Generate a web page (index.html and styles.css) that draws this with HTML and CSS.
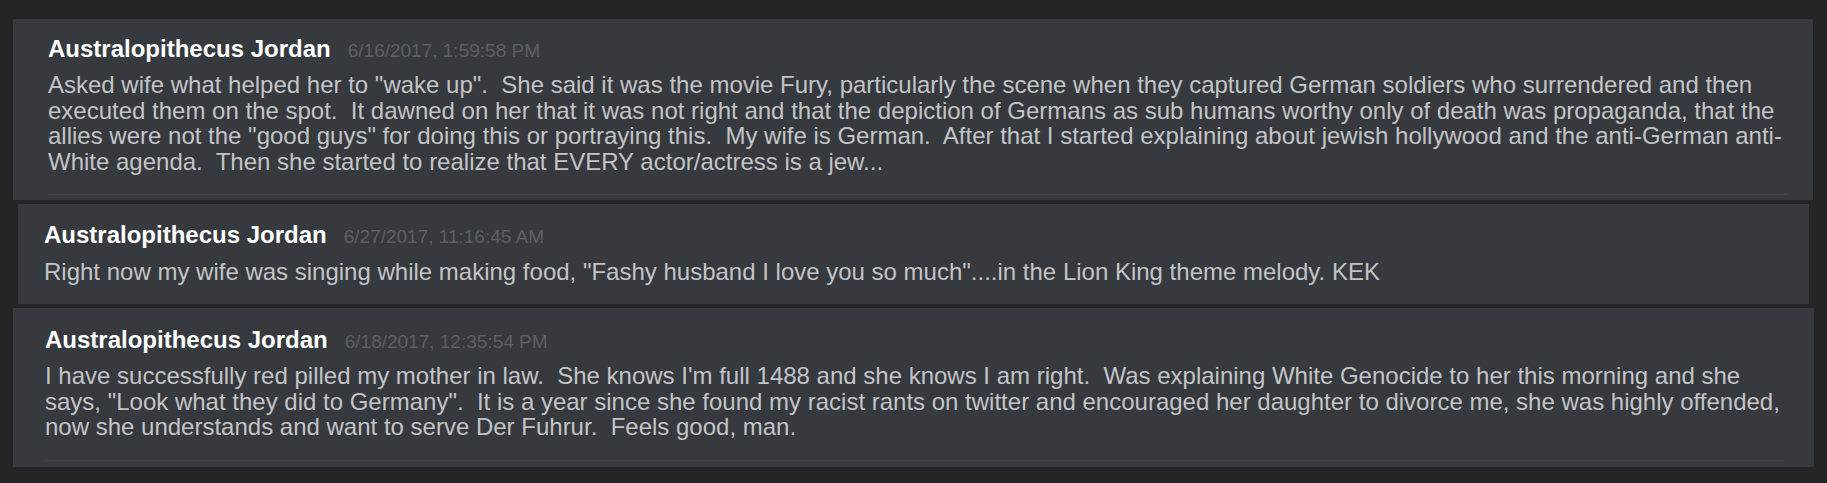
FILE: index.html
```html
<!DOCTYPE html>
<html lang="en">
<head>
<meta charset="utf-8">
<title>Messages</title>
<link rel="stylesheet" href="styles.css">
</head>
<body>
<main class="feed">
  <article class="msg msg--first">
    <header class="msg__head">
      <span class="msg__name">Australopithecus Jordan</span>
      <span class="msg__time">6/16/2017, 1:59:58 PM</span>
    </header>
    <div class="msg__body">Asked wife what helped her to "wake up".  She said it was the movie Fury, particularly the scene when they captured German soldiers who surrendered and then executed them on the spot.  It dawned on her that it was not right and that the depiction of Germans as sub humans worthy only of death was propaganda, that the allies were not the "good guys" for doing this or portraying this.  My wife is German.  After that I started explaining about jewish hollywood and the anti-German anti-White agenda.  Then she started to realize that EVERY actor/actress is a jew...</div>
  </article>
  <article class="msg msg--second">
    <header class="msg__head">
      <span class="msg__name">Australopithecus Jordan</span>
      <span class="msg__time">6/27/2017, 11:16:45 AM</span>
    </header>
    <div class="msg__body">Right now my wife was singing while making food, "Fashy husband I love you so much"....in the Lion King theme melody. KEK</div>
  </article>
  <article class="msg msg--third">
    <header class="msg__head">
      <span class="msg__name">Australopithecus Jordan</span>
      <span class="msg__time">6/18/2017, 12:35:54 PM</span>
    </header>
    <div class="msg__body">I have successfully red pilled my mother in law.  She knows I'm full 1488 and she knows I am right.  Was explaining White Genocide to her this morning and she says, "Look what they did to Germany".  It is a year since she found my racist rants on twitter and encouraged her daughter to divorce me, she was highly offended, now she understands and want to serve Der Fuhrur.  Feels good, man.</div>
  </article>
</main>
</body>
</html>
```

FILE: styles.css
```css
html, body {
  margin: 0;
  padding: 0;
  background: #252525;
}

body {
  width: 1827px;
  height: 483px;
  overflow: hidden;
  font-family: "Liberation Sans", Arial, sans-serif;
}

.feed {
  display: flex;
  flex-direction: column;
  gap: 4px;
  padding-top: 19px;
}

.msg {
  background: #36393e;
  padding-top: 17px;
  padding-bottom: 5px;
}

.msg--first {
  margin: 0 14px 0 13px;
  padding-left: 35px;
  padding-right: 25px;
}

.msg--second {
  margin: 0 18px 0 18px;
  padding-left: 26px;
  padding-right: 25px;
  padding-top: 18px;
  padding-bottom: 0;
}

.msg--third {
  margin: 0 13px 0 13px;
  padding-left: 32px;
  padding-right: 29px;
  padding-top: 19px;
  padding-bottom: 6px;
}

.msg__head {
  display: flex;
  align-items: baseline;
  gap: 17px;
  height: 26px;
  line-height: 26px;
}

.msg__name {
  color: #ffffff;
  font-weight: 700;
  font-size: 24px;
}

.msg__time {
  color: #5e6064;
  font-size: 19px;
}

.msg__body {
  margin-top: 10px;
  padding-bottom: 20px;
  border-bottom: 1px solid #3f4247;
  color: #c3c4c6;
  font-size: 24px;
  line-height: 25.6px;
  white-space: pre-wrap;
}

.msg--second .msg__body {
  margin-top: 11px;
  padding-bottom: 19px;
  border-bottom: none;
}
```
